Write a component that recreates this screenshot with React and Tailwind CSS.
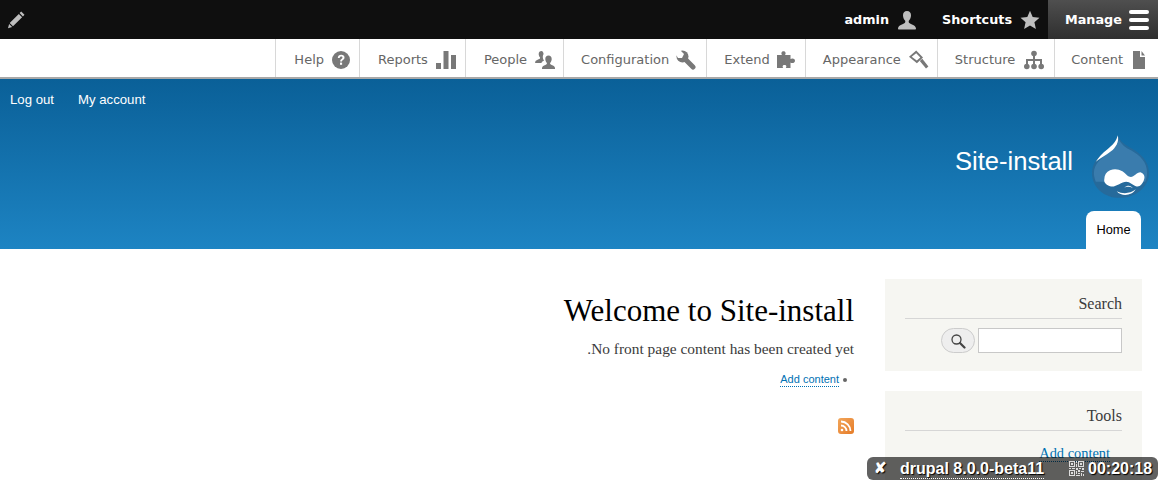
import React from 'react';

const PencilIcon = () => (
  <svg width="20" height="20" viewBox="0 0 20 20" fill="#bebebe">
    <path d="M15.200 1.500 18.500 4.800 16.900 6.400 13.600 3.100zM12.800 3.900 16.100 7.200 7 16.300 3.700 13zM3.100 13.900 6.200 17 2 18.200z" />
  </svg>
);

const UserIcon = () => (
  <svg width="20" height="20" viewBox="0 0 20 20" fill="#bebebe">
    <path d="M10 1c-2.600 0-4 1.900-4 4.300 0 2.100.8 4 2 5.300.5.600.4 1.900-.3 2.500C6 14.500 1.500 15 1 18.500c0 .6.400 1 1 1h16c.6 0 1-.4 1-1-.5-3.500-5-4-6.700-5.400-.7-.6-.8-1.900-.3-2.500 1.200-1.300 2-3.200 2-5.300C14 2.900 12.600 1 10 1z" />
  </svg>
);

const StarIcon = () => (
  <svg width="20" height="20" viewBox="0 0 20 20" fill="#bebebe">
    <path d="M10 .8 12.700 7.100 19.500 7.700 14.400 12.200 15.900 18.900 10 15.400 4.100 18.900 5.600 12.200.5 7.700 7.300 7.100z" />
  </svg>
);

const MenuIcon = () => (
  <div className="flex w-[20px] flex-col gap-[4px]">
    <div className="h-[4px] rounded-[2px] bg-white" />
    <div className="h-[4px] rounded-[2px] bg-white" />
    <div className="h-[4px] rounded-[2px] bg-white" />
  </div>
);

const HelpIcon = () => (
  <svg width="18" height="18" viewBox="0 0 18 18">
    <circle cx="9" cy="9" r="9" fill="#787878" />
    <path d="M5.800 7c.1-2 1.500-3.200 3.400-3.200 2 0 3.300 1.100 3.300 2.700 0 1.200-.6 1.900-1.500 2.500-.7.500-1 .8-1 1.600H8.200c0-1.300.3-1.900 1.300-2.600.6-.4 1-.8 1-1.400 0-.7-.5-1.100-1.300-1.100-.9 0-1.400.5-1.500 1.500z" fill="#fff" />
    <rect x="8" y="11.600" width="2.100" height="2.200" fill="#fff" />
  </svg>
);

const ReportsIcon = () => (
  <svg width="20" height="20" viewBox="0 0 20 20" fill="#787878">
    <rect x="0" y="13" width="5" height="6" />
    <rect x="7.500" y="1" width="5" height="18" />
    <rect x="15" y="5" width="5" height="14" />
  </svg>
);

const PeopleIcon = () => (
  <svg width="20" height="20" viewBox="0 0 20 20" fill="#787878">
    <path d="M6.500 1C4.800 1 3.700 2.300 3.700 4c0 1.300.5 2.500 1.200 3.300.3.400.3 1.100-.2 1.500C3.600 9.700.6 10 0 12.300c0 .4.200.7.600.7h5.800c.3-1 1.500-1.800 2.700-2.400-.8-1-1.300-2.400-1.300-3.900 0-1 .3-1.900.8-2.700C8.300 2 7.600 1 6.500 1z" />
    <path d="M13.500 5.500c-2 0-3.200 1.500-3.200 3.400 0 1.500.6 2.900 1.400 3.800.3.400.3 1.200-.2 1.600-1.300 1-3.700 1.300-4.500 3.400v1.300h13v-1.300c-.8-2.100-3.200-2.400-4.500-3.400-.5-.4-.5-1.200-.2-1.600.8-.9 1.400-2.300 1.400-3.800 0-1.900-1.200-3.400-3.200-3.400z" />
  </svg>
);

const WrenchIcon = () => (
  <svg width="20" height="20" viewBox="0 0 20 20">
    <circle cx="6.500" cy="6.500" r="6" fill="#787878" />
    <path d="M7.500 7.500 17 17" stroke="#787878" stroke-width="5" stroke-linecap="round" />
    <path d="M-1 3 3 -1 8 4 6 8 2 8z" fill="#fff" />
  </svg>
);

const PuzzleIcon = () => (
  <svg width="20" height="20" viewBox="0 0 20 20" fill="#787878">
    <path d="M1 5h5c-.9-1-1-3.800 1.500-3.800S10 4 9 5h5.500v4c1-1 4.500-1 4.500 1.700s-3.500 2.800-4.500 1.800V18h-4.700c.9-1 .9-3-1.300-3s-2.200 2-1.300 3H1z" />
  </svg>
);

const BrushIcon = () => (
  <svg width="22" height="20" viewBox="0 0 22 20" fill="#787878">
    <path d="M8.200.5 1 6.800 8.900 13.200 15 7.500zM8.200 3.200 12.300 7.400 8.800 10.600 3.700 6.700z" fill-rule="evenodd" />
    <path d="M11.800 11 14.300 8.800 20.400 16.500 18 18.500z" />
  </svg>
);

const TreeIcon = () => (
  <svg width="20" height="20" viewBox="0 0 20 20" fill="#787878">
    <circle cx="10" cy="3.500" r="2.800" />
    <circle cx="2.800" cy="16.500" r="2.800" />
    <circle cx="10" cy="16.500" r="2.800" />
    <circle cx="17.200" cy="16.500" r="2.800" />
    <path d="M9 5h2v4h7v5h-2v-3h-5v3H9v-3H4v3H2V9h7z" />
  </svg>
);

const FileIcon = () => (
  <svg width="16" height="20" viewBox="0 0 16 20" fill="#787878">
    <path d="M2 1h7v6h5v12H2zM10.500 1 14 5.500h-3.500z" />
  </svg>
);

const DrupalLogo = () => (
  <svg width="57" height="65" viewBox="0 0 60 68">
    <path d="M27 1c-1 6-5 10-11 15C8 22 0 29 0 41c0 15 13 26 29 26s31-11 31-26c0-13-9-21-18-26C35 11 30 8 27 1z" fill="#266a9b" />
    <path d="M28 5c0 6-5 10-11 15C10 25 2 31 2 41c0 3 1 6 2 9h52c1-3 2-6 2-9 0-12-8-19-17-24C35 14 31 11 28 5z" fill="#3a7cad" />
    <path d="M27 1C26 7 22 11 16 16 11 20 7 24 4 29 9 25 15 22 20 18 25 14 29 8 27 1z" fill="#fff" />
    <path d="M19 38C24 36 28 37 32 39 36 42 38 45 41 45 44 45 47 40 51 40 54 41 56 44 55 47 54 52 50 56 47 55 43 54 40 50 36 50 31 50 25 56 20 55 15 54 12 51 13 47 13 43 15 40 19 38z" fill="#fff" />
    <path d="M26 60C32 63 40 63 46 58 42 65 31 66 26 60zM34 56C38 53 41 54 43 57 40 55 37 55 34 56z" fill="#fff" />
  </svg>
);

const SearchIcon = () => (
  <svg width="16" height="16" viewBox="0 0 16 16" fill="none" stroke="#444">
    <circle cx="6.500" cy="6.500" r="4.500" stroke-width="1.300" />
    <path d="M10 10l4.500 4.500" stroke-width="2.200" stroke-linecap="round" />
  </svg>
);

const RssIcon = () => (
  <div className="flex h-[16px] w-[16px] items-center justify-center rounded-[3px] bg-gradient-to-br from-[#f2a65a] to-[#e57b25]">
    <svg width="12" height="12" viewBox="0 0 12 12" fill="none" stroke="#fff" stroke-width="1.800">
      <circle cx="2" cy="10" r="1.300" fill="#fff" stroke="none" />
      <path d="M1 5.500A5.500 5.500 0 0 1 6.500 11M1 1.500A9.500 9.500 0 0 1 10.500 11" />
    </svg>
  </div>
);

const QrIcon = () => (
  <svg width="15" height="15" viewBox="0 0 15 15" fill="#ddd">
    <path d="M0 0h6v6H0zM1 1v4h4V1zM9 0h6v6H9zM10 1v4h4V1zM0 9h6v6H0zM1 10v4h4v-4z" fill-rule="evenodd" />
    <path d="M2 2h2v2H2zM11 2h2v2h-2zM2 11h2v2H2zM7 0h1v2H7zM7 3h1v3H7zM0 7h2v1H0zM3 7h3v1H3zM7 7h2v2H7zM10 7h2v1h-2zM13 7h2v2h-2zM9 9h2v2H9zM12 10h3v1h-3zM7 10h1v3H7zM9 12h2v1H9zM12 12h1v3h-1zM14 13h1v2h-1zM7 14h4v1H7z" />
  </svg>
);

const trayItems = [
  { label: 'Content', icon: <FileIcon />, padRight: 'pr-[11px]', padLeft: 'pl-[16px]', gap: 'gap-[8px]' },
  { label: 'Structure', icon: <TreeIcon />, padRight: 'pr-[10px]', padLeft: 'pl-[17px]', gap: 'gap-[9px]' },
  { label: 'Appearance', icon: <BrushIcon />, padRight: 'pr-[7px]', padLeft: 'pl-[17px]', gap: 'gap-[7px]' },
  { label: 'Extend', icon: <PuzzleIcon />, padRight: 'pr-[9px]', padLeft: 'pl-[17px]', gap: 'gap-[6px]' },
  { label: 'Configuration', icon: <WrenchIcon />, padRight: 'pr-[10px]', padLeft: 'pl-[17px]', gap: 'gap-[7px]' },
  { label: 'People', icon: <PeopleIcon />, padRight: 'pr-[8px]', padLeft: 'pl-[18px]', gap: 'gap-[8px]' },
  { label: 'Reports', icon: <ReportsIcon />, padRight: 'pr-[9px]', padLeft: 'pl-[18px]', gap: 'gap-[8px]' },
  { label: 'Help', icon: <HelpIcon />, padRight: 'pr-[9px]', padLeft: 'pl-[18px]', gap: 'gap-[8px]' },
];

const App = () => {
  return (
    <div className="relative h-[480px] w-[1158px] overflow-hidden bg-white font-['Liberation_Sans',sans-serif]">
      {/* Toolbar */}
      <div className="flex h-[39px] items-center bg-[#0f0f0f] font-['DejaVu_Sans',sans-serif] text-[12.8px] font-bold text-white">
        <div className="ml-[6px]"><PencilIcon /></div>
        <div className="ml-auto flex items-center gap-[8px]">admin <UserIcon /></div>
        <div className="ml-[25px] flex items-center gap-[8px]">Shortcuts <StarIcon /></div>
        <div className="ml-[8px] flex h-full w-[110px] items-center gap-[7px] bg-gradient-to-b from-[#4f4f4f] to-[#2f2f2f] pl-[17px]">Manage <MenuIcon /></div>
      </div>

      {/* Tray */}
      <div className="flex h-[40px] justify-start border-b-2 border-[#a8a8a8] bg-white pt-[4px] font-['DejaVu_Sans',sans-serif] text-[13px] text-[#666]" dir="rtl">
        {trayItems.map((item) => (
          <div key={item.label} className={`-mt-[4px] flex items-center border-l border-[#d8d8d8] pt-[4px] ${item.padLeft} ${item.padRight} ${item.gap}`} dir="ltr">
            <span>{item.label}</span>
            {item.icon}
          </div>
        ))}
      </div>

      {/* Header */}
      <div className="flex h-[170px] flex-col bg-gradient-to-b from-[#0a6098] to-[#1d84c3] text-white">
        <div className="flex gap-[24px] pl-[10px] pt-[11px] text-[13.200px]">
          <span>Log out</span>
          <span>My account</span>
        </div>
        <div className="mt-[24px] flex items-center justify-end pr-[9px]">
          <span className="mb-[10px] mr-[19px] text-[25.6px]">Site-install</span>
          <DrupalLogo />
        </div>
        <div className="mt-auto flex justify-end pr-[17px]">
          <div className="flex h-[38px] w-[55px] items-center justify-center rounded-t-[8px] bg-white text-[12.8px] text-black">Home</div>
        </div>
      </div>

      {/* Content */}
      <div className="flex justify-end pr-[16px] pt-[30px] font-['Liberation_Serif',serif]">
        <div className="mr-[31px] flex flex-col items-end pt-[14px]">
          <h1 className="text-[31px] leading-[36px] text-black">Welcome to Site-install</h1>
          <p className="mt-[12px] text-[15.400px] leading-[16px] text-[#3b3b3b]" dir="rtl">No front page content has been created yet.</p>
          <div className="mr-[7px] mt-[15px] flex items-center gap-[4px] font-['Liberation_Sans',sans-serif] text-[11px]">
            <span className="border-b border-dotted border-[#0071b3] leading-[14px] text-[#0071b3]">Add content</span>
            <span className="h-[4px] w-[4px] rounded-full bg-[#666]" />
          </div>
          <div className="mt-[31px]"><RssIcon /></div>
        </div>
        <div className="flex w-[257px] flex-col gap-[20px]">
          <div className="h-[92px] bg-[#f6f6f2] px-[20px] pt-[15px]">
            <div className="border-b border-[#d6d6d6] pb-[5px] text-right text-[16px] leading-[19px] text-[#3b3b3b]">Search</div>
            <div className="mt-[9px] flex items-center justify-end gap-[3px]">
              <div className="flex h-[25px] w-[34px] items-center justify-center rounded-[13px] border border-[#ccc] bg-[#eee]"><SearchIcon /></div>
              <div className="h-[25px] w-[144px] border border-[#c8c8c8] bg-white" />
            </div>
          </div>
          <div className="h-[100px] bg-[#f6f6f2] px-[20px] pt-[15px]">
            <div className="border-b border-[#d6d6d6] pb-[5px] text-right text-[16px] leading-[19px] text-[#3b3b3b]">Tools</div>
            <div className="mt-[15px] pr-[12px] text-right text-[14.400px] leading-[15px]">
              <span className="border-b border-dotted border-[#0071b3] text-[#0071b3]">Add content</span>
            </div>
          </div>
        </div>
      </div>

      {/* Recording badge */}
      <div className="absolute bottom-0 right-0 flex h-[23px] w-[291px] items-center rounded-[6px] bg-[rgba(0,0,0,0.62)] text-[16px] font-bold text-white [text-shadow:1px_1px_1px_#000]">
        <span className="ml-[7px] w-[26px] text-[15px]">✘</span>
        <span className="border-b border-dotted border-white leading-[19px]">drupal 8.0.0-beta11</span>
        <span className="ml-[25px]"><QrIcon /></span>
        <span className="ml-[4px]">00:20:18</span>
      </div>
    </div>
  );
};

export default App;
